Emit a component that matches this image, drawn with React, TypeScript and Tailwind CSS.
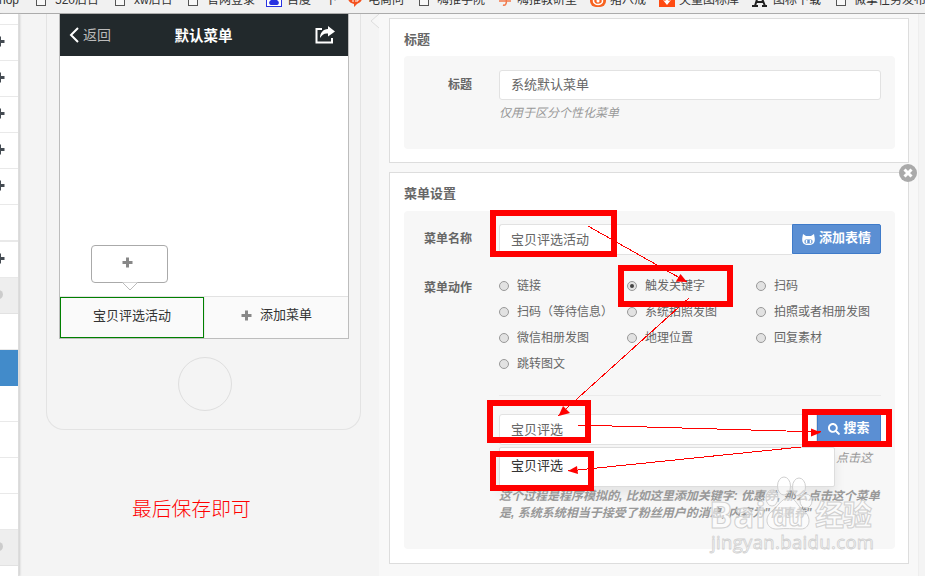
import React from "react";
import { FaSearch } from "react-icons/fa";

interface Bookmark {
  label: string;
  icon: string;
  // slot width up to the next bookmark, plus the gap after the icon
  slot: string;
  gap: string;
}

const bookmarks: Bookmark[] = [
  { label: "hop", icon: "none", slot: "w-[37px]", gap: "" },
  { label: "520后台", icon: "page", slot: "w-[79px]", gap: "ml-[9px]" },
  { label: "xw后台", icon: "page", slot: "w-[73px]", gap: "ml-[9px]" },
  { label: "官网登录", icon: "page", slot: "w-[78px]", gap: "ml-[9px]" },
  { label: "百度", icon: "baidu", slot: "w-[59px]", gap: "ml-[5px]" },
  { label: "下", icon: "none", slot: "w-[23px]", gap: "" },
  { label: "电商问", icon: "bubble", slot: "w-[71px]", gap: "ml-[5px]" },
  { label: "嗨推学院", icon: "page", slot: "w-[79px]", gap: "ml-2" },
  { label: "嗨推教研室", icon: "hi", slot: "w-[92px]", gap: "ml-[5px]" },
  { label: "猪八戒", icon: "pig", slot: "w-[69px]", gap: "ml-1" },
  { label: "矢量图标库", icon: "vector", slot: "w-[93px]", gap: "ml-1" },
  { label: "图标下载", icon: "person", slot: "w-[84px]", gap: "ml-1.5" },
  { label: "微擎任务发布", icon: "page", slot: "w-[100px]", gap: "ml-2" },
];

const BookmarkIcon: React.FC<{ type: string }> = ({ type }) => {
  switch (type) {
    case "page":
      return <span className="w-[10px] h-3 border border-[#555] bg-[#f8f8f8] shrink-0" />;
    case "baidu":
      return (
        <svg width="16" height="16" viewBox="0 0 16 16" className="shrink-0">
          <rect x="0.5" y="0.5" width="15" height="14" fill="#fff" stroke="#2932e1" />
          <path d="M8 5c2 0 2.500 3 4 4s1 4-1 4H5c-2 0-2.500-3-1-4s2-4 4-4z" fill="#2932e1" />
        </svg>
      );
    case "bubble":
      return (
        <svg width="15" height="14" viewBox="0 0 15 14" className="shrink-0">
          <path d="M0 5a7 6 0 0 1 14 0c0 4-3 5-5 6l-3 3v-3C2 10 0 8 0 5z" fill="#f4511e" />
          <path d="M5 9V5h5v3H7" stroke="#fff" fill="none" />
        </svg>
      );
    case "hi":
      return (
        <svg width="14" height="14" viewBox="0 0 14 14" className="shrink-0">
          <path d="M1 8h12M4 5l6-1M8 5c1 5 0 8-3 7" stroke="#f2794b" strokeWidth="1.500" fill="none" />
        </svg>
      );
    case "pig":
      return (
        <svg width="16" height="16" viewBox="0 0 16 16" className="shrink-0">
          <rect width="16" height="15" rx="6" fill="#f76321" />
          <ellipse cx="8" cy="9" rx="4.500" ry="3.500" fill="none" stroke="#fff" strokeWidth="1.500" />
          <circle cx="8" cy="9" r="1.500" fill="#fff" />
        </svg>
      );
    case "vector":
      return (
        <svg width="16" height="16" viewBox="0 0 16 16" className="shrink-0">
          <rect width="16" height="15" fill="#ff4b12" />
          <path d="M4 8l2.500 1V6h3v3L12 8l-4 5z" fill="#fff" />
        </svg>
      );
    case "person":
      return (
        <svg width="15" height="16" viewBox="0 0 15 16" className="shrink-0">
          <path d="M4 2h7M6 4l-3 10M9 4l4 10M4 10h8M0 14h6M10 14h5" stroke="#222" strokeWidth="2" fill="none" />
        </svg>
      );
    default:
      return null;
  }
};

const BookmarkBar: React.FC = () => (
  <div className="h-[14px] shrink-0 overflow-hidden border-b border-[#ababab] bg-[#f1f1f1]">
    <div className="flex w-[950px] h-4 -mt-2 -ml-px text-xs text-[#333]">
      {bookmarks.map((item) => (
        <div key={item.label} className={`flex items-center shrink-0 whitespace-nowrap ${item.slot}`}>
          <BookmarkIcon type={item.icon} />
          <span className={`leading-4 ${item.gap}`}>{item.label}</span>
        </div>
      ))}
    </div>
  </div>
);

const PlusIcon: React.FC<{ className: string }> = ({ className }) => (
  <svg width="11" height="11" viewBox="0 0 11 11" className={`shrink-0 ${className}`}>
    <path d="M4 0.500h3V4h3.500v3H7v3.500H4V7H0.500V4H4z" fill="currentColor" />
  </svg>
);

const sideRows = [
  "first", "plus", "plus", "plus", "plus", "plus", "double", "plus", "group",
  "blank", "active", "blank", "blank", "blank", "blank", "group", "blank",
];

const Sidebar: React.FC = () => (
  <div className="w-[19px] shrink-0 overflow-hidden bg-white border-r border-[#ddd] shadow-[1px_0_2px_#ccc] z-10">
    {sideRows.map((row, index) => {
      if (row === "first") {
        return <div key={index} className="h-[11px] border-b border-[#e9e9e9]" />;
      }
      if (row === "double") {
        return <div key={index} className="h-[37px] border-b-2 border-[#e9e9e9]" />;
      }
      if (row === "active") {
        return <div key={index} className="h-9 bg-[#428bca]" />;
      }
      if (row === "group") {
        return (
          <div key={index} className="h-9 flex items-center bg-[#eee] border-b border-[#e2e2e2]">
            <span className="w-[9px] h-[9px] -ml-[6px] -mt-0.5 rounded-full bg-[#ccc]" />
          </div>
        );
      }
      return (
        <div key={index} className="h-9 flex items-center border-b border-[#e9e9e9]">
          {row === "plus" && <PlusIcon className="-ml-[6px] -mt-[3px] text-[#444b52]" />}
        </div>
      );
    })}
  </div>
);

const ShareIcon: React.FC = () => (
  <svg width="20" height="18" viewBox="0 0 20 18" className="mr-[13px]">
    <path d="M7 3H1.500v13.500h15.500V12" stroke="#fff" strokeWidth="2" fill="none" />
    <path d="M13 0l7 5.500-7 5V7.500C9 7 7 9 5 12c0-5 3-9 8-9z" fill="#fff" />
  </svg>
);

const Phone: React.FC = () => (
  <div className="w-[315px] h-[416px] ml-[27px] px-3 border border-t-0 border-[#e3e3e3] rounded-b-[18px]">
    <div className="w-[290px] h-[325px] flex flex-col border border-t-0 border-[#bdbdbd] bg-white">
      <div className="h-[42px] shrink-0 flex items-center justify-between bg-[#22292c]">
        <div className="w-[60px] flex items-center text-sm text-[#bbb] pl-[9px]">
          <svg width="10" height="16" viewBox="0 0 10 16" className="shrink-0">
            <path d="M9 1L2 8l7 7" stroke="#fff" strokeWidth="2" fill="none" />
          </svg>
          <span className="ml-1 whitespace-nowrap leading-5">返回</span>
        </div>
        <div className="text-[14.500px] leading-5 font-bold text-white -ml-[28px] mt-[2px]">默认菜单</div>
        <ShareIcon />
      </div>
      <div className="flex-1 flex flex-col justify-end pl-[31px] pb-[13px]">
        <div className="relative w-[77px] h-[38px] flex items-center justify-center rounded border border-[#aaa]">
          <PlusIcon className="text-[#888] -ml-1 -mt-[3px]" />
          <svg width="16" height="9" viewBox="0 0 16 9" className="absolute left-[30px] top-[36px]">
            <path d="M0.500 0.500L8 8l7.500-7.500" fill="#fff" stroke="#bbb" />
          </svg>
        </div>
      </div>
      <div className="h-[42px] shrink-0 flex border-t border-[#e2e2e2] bg-[#fafafa] text-[13px] text-[#333]">
        <div className="w-[144px] flex items-center justify-center border border-[#008000] pb-[3px]">宝贝评选活动</div>
        <div className="flex-1 flex items-center justify-center border-l border-[#ececec] pb-[5px]">
          <PlusIcon className="text-[#888] mr-2" />
          添加菜单
        </div>
      </div>
    </div>
    <div className="w-[54px] h-[54px] mt-[18px] ml-[119px] rounded-full border border-[#dedede]" />
  </div>
);

const FieldLabel: React.FC<{ text: string }> = ({ text }) => (
  <div className="w-[68px] mr-[27px] pt-0.5 shrink-0 text-right text-xs leading-[26px] font-bold text-[#666]">{text}</div>
);

const actions = [
  "链接", "触发关键字", "扫码",
  "扫码（等待信息）", "系统拍照发图", "拍照或者相册发图",
  "微信相册发图", "地理位置", "回复素材",
  "跳转图文",
];

const ActionRadio: React.FC<{ label: string }> = ({ label }) => (
  <div className="flex items-center h-[26px] text-xs text-[#666] whitespace-nowrap">
    <span className="w-[10px] h-[10px] shrink-0 mr-2 flex items-center justify-center rounded-full border border-[#999] bg-[#e2e2e2]">
      {label === "触发关键字" && <span className="w-1 h-1 rounded-full bg-[#444]" />}
    </span>
    {label}
  </div>
);

const TitleCard: React.FC = () => (
  <div className="h-[145px] px-[14px] border border-[#ddd] bg-white">
    <div className="h-[37px] pt-[11px] text-[13px] leading-5 font-bold text-[#666]">标题</div>
    <div className="h-[93px] w-[491px] pt-[14px] flex rounded-sm bg-[#f7f7f7]">
      <FieldLabel text="标题" />
      <div className="w-[382px]">
        <div className="h-[30px] px-[11px] rounded-[3px] border border-[#e2e2e2] bg-white text-[13px] leading-7 text-[#666]">
          系统默认菜单
        </div>
        <div className="mt-1 text-xs leading-[18px] italic text-[#999]">仅用于区分个性化菜单</div>
      </div>
    </div>
  </div>
);

const SettingsCard: React.FC = () => (
  <div className="relative h-[392px] mt-[9px] px-[14px] border border-[#ddd] bg-white">
    <div className="absolute -right-[9px] -top-[9px] w-[18px] h-[18px] rounded-full bg-[#aaa] flex items-center justify-center">
      <svg width="10" height="10" viewBox="0 0 10 10">
        <path d="M1.500 1.500l7 7M8.500 1.500l-7 7" stroke="#fff" strokeWidth="3" />
      </svg>
    </div>
    <div className="h-[38px] pt-[11px] text-[13px] leading-5 font-bold text-[#666]">菜单设置</div>
    <div className="h-[338px] w-[491px] pt-[13px] rounded-sm bg-[#f7f7f7]">
      <div className="flex h-[49px]">
        <FieldLabel text="菜单名称" />
        <div className="w-[382px] h-[31px] flex">
          <div className="w-[293px] px-[11px] rounded-l-[3px] border border-r-0 border-[#e2e2e2] bg-white text-[13px] leading-[29px] text-[#666]">
            宝贝评选活动
          </div>
          <div className="w-[89px] h-[30px] pb-[2px] flex items-center justify-center rounded-r-[2px] border border-[#3f7bc9] bg-[#5b8fd3] text-[13px] font-bold text-white">
            <svg width="13" height="11" viewBox="0 0 13 11" className="mr-1 mt-0.5">
              <path d="M1 0l3 2h5l3-2 .7 4c.5 5-1.500 7-6.200 7S-.2 9 .3 4z" fill="#fff" />
              <rect x="2.500" y="5.500" width="8" height="4" rx="1.500" fill="#5b8fd3" />
              <path d="M4.500 6v3M8.500 6v3" stroke="#fff" strokeWidth="1.500" />
            </svg>
            添加表情
          </div>
        </div>
      </div>
      <div className="flex h-[122px]">
        <FieldLabel text="菜单动作" />
        <div className="w-[382px] grid grid-cols-[128px_129px_125px] content-start">
          {actions.map((label) => (
            <ActionRadio key={label} label={label} />
          ))}
        </div>
      </div>
      <div className="ml-[95px] w-[382px] border-t border-[#ebebeb] pt-[18px]">
        <div className="h-[31px] flex">
          <div className="w-[318px] px-[11px] rounded-l-[3px] border border-[#e2e2e2] bg-white text-[13px] leading-[30px] text-[#666]">
            宝贝评选
          </div>
          <div className="w-[64px] pb-[3px] flex items-center justify-center border border-[#3f7bc9] bg-[#5b8fd3] text-[13px] font-bold text-white">
            <FaSearch className="mr-[3px] mt-px text-xs" />
            搜索
          </div>
        </div>
        <div className="mt-0.5 flex text-[#999]">
          <div className="w-[336px] shrink-0 h-[40px] px-[11px] border border-[#ddd] rounded-[2px] bg-white shadow-[0_6px_12px_rgba(0,0,0,0.08)] text-[13px] leading-[35px] text-[#333]">
            宝贝评选
          </div>
          <div className="ml-px text-xs leading-[22px] italic whitespace-nowrap">点击这</div>
        </div>
        <div className="pt-px text-xs leading-[17px] italic font-bold text-[#999] whitespace-nowrap">
          <div>这个过程是程序模拟的, 比如这里添加关键字: 优惠券, 那么点击这个菜单</div>
          <div>是, 系统系统相当于接受了粉丝用户的消息, 内容为"优惠券"</div>
        </div>
      </div>
    </div>
  </div>
);

const Annotations: React.FC = () => (
  <svg width="925" height="576" viewBox="0 0 925 576" className="absolute left-0 top-0 pointer-events-none">
    <rect x="881" y="415" width="5" height="26" fill="#fff" />
    <rect x="808" y="415" width="8" height="26" fill="#fff" />
    <g fill="none" stroke="#f00" strokeWidth="6" shapeRendering="crispEdges">
      <rect x="493" y="213" width="121" height="41" />
      <rect x="621" y="268" width="109" height="36" />
      <rect x="490" y="403" width="98" height="37" />
      <rect x="493" y="454" width="98" height="34" />
      <rect x="805" y="412" width="84" height="32" />
    </g>
    <g stroke="#f00" strokeWidth="1" shapeRendering="crispEdges">
      <path d="M588 226L687 282M689 298L558 416M577 425L821 432M801 447L568 471" />
    </g>
    <g fill="#f00">
      <path d="M687 282l-11-0.500 4.500-7.500z" />
      <path d="M558.500 416l4.500-10 7 7z" />
      <path d="M821 432.500l-10 4v-8z" />
      <path d="M568 471l9-5 1 8z" />
    </g>
  </svg>
);

const Watermark: React.FC = () => (
  <svg
    width="190"
    height="90"
    viewBox="700 470 190 90"
    className="absolute left-[700px] top-[470px] pointer-events-none font-['Open_Sans','Noto_Sans_CJK_SC',sans-serif]"
  >
    <g fill="#fff" fillOpacity="0.55" stroke="#d0d0d0" strokeWidth="1">
      <ellipse cx="784" cy="486" rx="6.500" ry="9" />
      <ellipse cx="799" cy="487" rx="6.500" ry="9" />
      <ellipse cx="772" cy="498" rx="6" ry="8" />
      <ellipse cx="806" cy="501" rx="6" ry="7" />
      <path d="M789 498c7 0 8 8 15 13 8 6 6 18-3 18-8 0-15-1-23 0-12 1-14-11-7-17 7-5 10-14 18-14z" />
      <text x="709" y="528" fontSize="35" fontWeight="bold" textLength="57">Bai</text>
      <text x="773" y="526" fontSize="23" fontWeight="bold" textLength="30">du</text>
      <text x="815" y="526" fontSize="29" fontWeight="bold" textLength="57">经验</text>
      <text x="711" y="549" fontSize="18.500" textLength="163" strokeWidth="0.8">jingyan.baidu.com</text>
    </g>
  </svg>
);

const App: React.FC = () => {
  return (
    <div className="relative w-[925px] h-[576px] flex flex-col overflow-hidden bg-[#f4f4f4] font-['Liberation_Sans','Noto_Sans_CJK_SC',sans-serif]">
      <BookmarkBar />
      <div className="flex flex-1 min-h-0">
        <Sidebar />
        <div className="w-[351px] shrink-0">
          <Phone />
          <div className="mt-[65px] ml-[113px] text-[19.800px] leading-7 font-light text-[#f00]">最后保存即可</div>
        </div>
        <svg width="9" height="16" viewBox="0 0 9 16" className="shrink-0">
          <path d="M9 0L1 7l8 7" fill="#f7f7f7" stroke="#ddd" />
        </svg>
        <div className="w-[540px] shrink-0 pt-1 pl-[10px] pr-[9px] border-r border-[#eee] bg-[#f8f8f8]">
          <TitleCard />
          <SettingsCard />
        </div>
      </div>
      <Annotations />
      <Watermark />
    </div>
  );
};

export default App;
